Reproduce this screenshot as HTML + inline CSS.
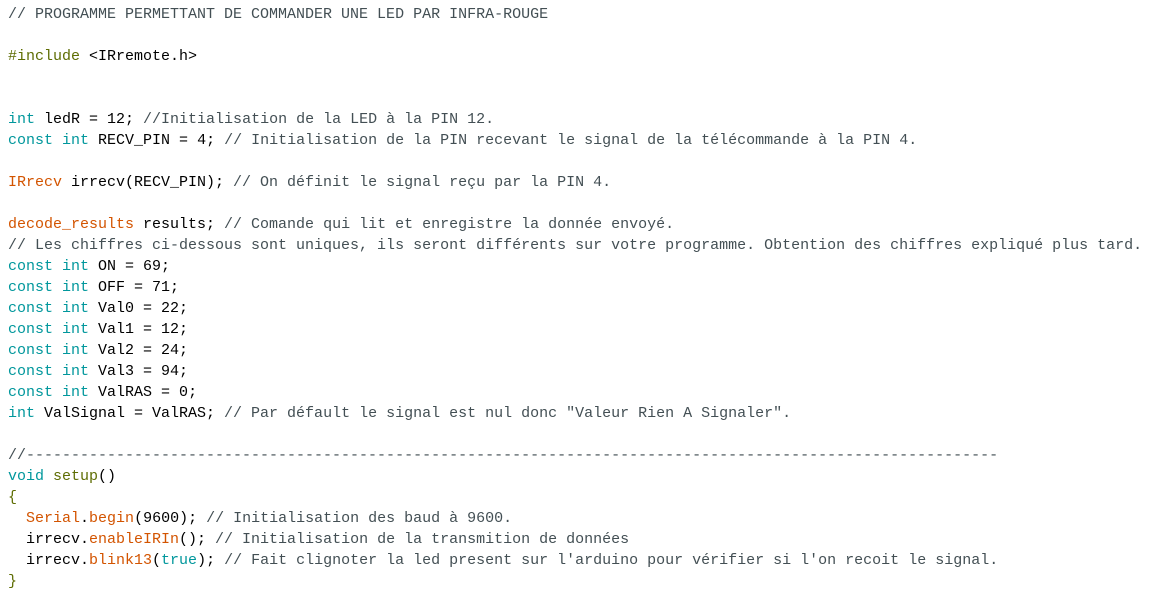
<!DOCTYPE html>
<html><head><meta charset="utf-8"><style>
html,body{margin:0;padding:0;background:#fff;width:1151px;height:590px;overflow:hidden}
pre{margin:0;padding:4px 0 0 8px;font-family:"Liberation Mono",monospace;font-size:15px;line-height:21px;color:#000}
.k{color:#00979c}.o{color:#d35400}.c{color:#434f54}.g{color:#5e6d03}
</style></head><body><pre><span class="c">// PROGRAMME PERMETTANT DE COMMANDER UNE LED PAR INFRA-ROUGE</span>

<span class="g">#include</span> &lt;IRremote.h&gt;


<span class="k">int</span> ledR = 12; <span class="c">//Initialisation de la LED à la PIN 12.</span>
<span class="k">const</span> <span class="k">int</span> RECV_PIN = 4; <span class="c">// Initialisation de la PIN recevant le signal de la télécommande à la PIN 4.</span>

<span class="o">IRrecv</span> irrecv(RECV_PIN); <span class="c">// On définit le signal reçu par la PIN 4.</span>

<span class="o">decode_results</span> results; <span class="c">// Comande qui lit et enregistre la donnée envoyé.</span>
<span class="c">// Les chiffres ci-dessous sont uniques, ils seront différents sur votre programme. Obtention des chiffres expliqué plus tard.</span>
<span class="k">const</span> <span class="k">int</span> ON = 69;
<span class="k">const</span> <span class="k">int</span> OFF = 71;
<span class="k">const</span> <span class="k">int</span> Val0 = 22;
<span class="k">const</span> <span class="k">int</span> Val1 = 12;
<span class="k">const</span> <span class="k">int</span> Val2 = 24;
<span class="k">const</span> <span class="k">int</span> Val3 = 94;
<span class="k">const</span> <span class="k">int</span> ValRAS = 0;
<span class="k">int</span> ValSignal = ValRAS; <span class="c">// Par défault le signal est nul donc "Valeur Rien A Signaler".</span>

<span class="c">//------------------------------------------------------------------------------------------------------------</span>
<span class="k">void</span> <span class="g">setup</span>()
<span class="g">{</span>
  <span class="o">Serial</span>.<span class="o">begin</span>(9600); <span class="c">// Initialisation des baud à 9600.</span>
  irrecv.<span class="o">enableIRIn</span>(); <span class="c">// Initialisation de la transmition de données</span>
  irrecv.<span class="o">blink13</span>(<span class="k">true</span>); <span class="c">// Fait clignoter la led present sur l'arduino pour vérifier si l'on recoit le signal.</span>
<span class="g">}</span></pre></body></html>
